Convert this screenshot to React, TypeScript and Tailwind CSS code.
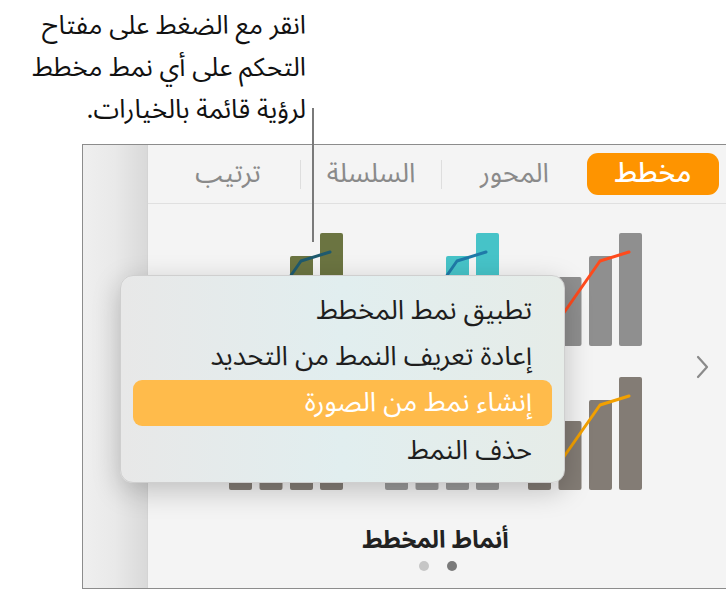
const AR = "font-['Noto_Sans_Arabic','Noto_Naskh_Arabic','DejaVu_Sans',sans-serif]";

type ThumbProps = { bar: string; line: string };

function Thumb({ bar, line }: ThumbProps) {
  const heights = [47, 69, 90, 113];
  const xs = [0, 30.5, 61, 91];
  return (
    <svg width="116" height="113" viewBox="0 0 116 113">
      {xs.map((x, i) => (
        <rect key={i} x={x} y={113 - heights[i]} width="23" height={heights[i]} rx="2" fill={bar} />
      ))}
      <polyline
        points="10,98 35,81 72,28 101,19"
        fill="none"
        stroke={line}
        strokeWidth="3"
        strokeLinecap="round"
        strokeLinejoin="round"
      />
    </svg>
  );
}

const rows: ThumbProps[][] = [
  [
    { bar: '#6b7441', line: '#1e5a6e' },
    { bar: '#46c3c8', line: '#1f7aa8' },
    { bar: '#8f8f8f', line: '#ff4a1c' },
  ],
  [
    { bar: '#857e77', line: '#d9c9a0' },
    { bar: '#9b9b9b', line: '#6fb0d0' },
    { bar: '#837c75', line: '#f2a000' },
  ],
];

const menuItems = [
  'تطبيق نمط المخطط',
  'إعادة تعريف النمط من التحديد',
  'إنشاء نمط من الصورة',
  'حذف النمط',
];

export default function App() {
  return (
    <div className={`relative w-[726px] h-[590px] bg-white overflow-hidden ${AR}`}>
      {/* callout */}
      <div dir="rtl" className="w-[306px] pt-[5px] text-right text-[26px] leading-[42px] text-[#111]">
        <div>انقر مع الضغط على مفتاح</div>
        <div>التحكم على أي نمط مخطط</div>
        <div>لرؤية قائمة بالخيارات.</div>
      </div>

      {/* panel */}
      <div className="absolute left-[82px] top-[144px] w-[646px] h-[445px] flex border border-[#8c8c8c] bg-[#f4f4f4]">
        <div className="w-[65px] shrink-0 bg-linear-to-r from-[#efefef] via-[#e9e9e9] to-[#d9d9d9] border-r border-[#d4d4d4]" />

        <div className="flex-1 flex flex-col">
          <div dir="rtl" className="h-[59px] shrink-0 flex items-center border-b border-[#e0e0e0] text-[27px] leading-[34px] text-[#8a8a8a]">
            <div className="mr-[8px] w-[132px] h-[42px] rounded-[11px] bg-[#fe9400] text-white text-[28px] font-medium flex items-center justify-center">
              مخطط
            </div>
            <div className="w-[145px] text-center">المحور</div>
            <div className="w-px h-[29px] bg-[#dedede]" />
            <div className="w-[140px] text-center">السلسلة</div>
            <div className="w-px h-[29px] bg-[#dedede]" />
            <div className="w-[144px] text-center">ترتيب</div>
          </div>

          <div className="flex items-center pl-[81px] pt-[29px]">
            <div className="flex flex-col gap-[31px]">
              {rows.map((row, r) => (
                <div key={r} className="flex">
                  <Thumb {...row[0]} />
                  <div className="ml-[40px]">
                    <Thumb {...row[1]} />
                  </div>
                  <div className="ml-[27px]">
                    <Thumb {...row[2]} />
                  </div>
                </div>
              ))}
            </div>
            <svg className="ml-[50px] mt-[10px]" width="16" height="26" viewBox="0 0 16 26">
              <polyline points="4,3 13,13 4,23" fill="none" stroke="#8a8a8a" strokeWidth="2.2" strokeLinecap="round" strokeLinejoin="round" />
            </svg>
          </div>

          <div className="mt-[35px] pr-[4px] text-center text-[24px] leading-[32px] font-bold text-[#222]">
            أنماط المخطط
          </div>
          <div className="mt-[4px] flex justify-center gap-[18px]">
            <div className="w-[10px] h-[10px] rounded-full bg-[#c6c6c6]" />
            <div className="w-[10px] h-[10px] rounded-full bg-[#7a7a7a]" />
          </div>
        </div>
      </div>

      {/* leader line */}
      <div className="absolute left-[312px] top-[108px] w-[2px] h-[134px] bg-[#7a7a7a]" />

      {/* context menu */}
      <div
        dir="rtl"
        className="absolute left-[120px] top-[275px] w-[445px] h-[208px] rounded-[13px] pt-[12px] pb-[8px] px-[12px] bg-linear-to-r from-[#e8e8e8] via-[#e1eeef] to-[#e6ece8] border border-[#cfcfcf] shadow-[0_8px_28px_rgba(0,0,0,0.22)] text-[27px] leading-[34px] text-[#1e1e1e]"
      >
        {menuItems.map((item, i) => (
          <div
            key={i}
            className={`flex items-center pr-[20px] rounded-[9px] ${i === 3 ? 'h-[50px]' : 'h-[46px]'} ${
              i === 2 ? 'bg-[#ffbb4b] text-white' : ''
            }`}
          >
            {item}
          </div>
        ))}
      </div>
    </div>
  );
}
